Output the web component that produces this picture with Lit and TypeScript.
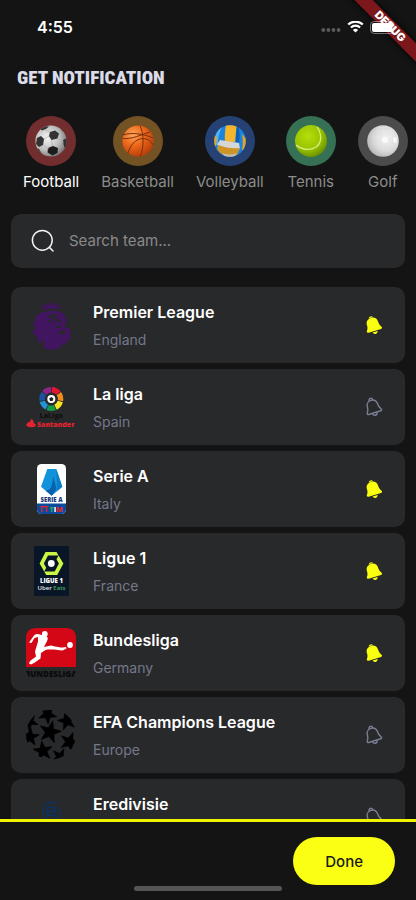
import { LitElement, html, svg, css } from "lit";
import { customElement, property, state } from "lit/decorators.js";
import { classMap } from "lit/directives/class-map.js";

interface Sport { id: string; name: string; }
interface League { id: string; name: string; country: string; on: boolean; }

const sports: Sport[] = [
  { id: "football", name: "Football" },
  { id: "basketball", name: "Basketball" },
  { id: "volleyball", name: "Volleyball" },
  { id: "tennis", name: "Tennis" },
  { id: "golf", name: "Golf" },
];

const balls: Record<string, unknown> = {
  football: svg`
    <defs>
      <radialGradient id="g" cx=".38" cy=".4" r=".68"><stop offset="0" stop-color="#f4f4f4"/><stop offset=".6" stop-color="#bdbdbd"/><stop offset="1" stop-color="#6c6c6c"/></radialGradient>
      <clipPath id="c"><circle cx="16" cy="16" r="15.6"/></clipPath>
    </defs>
    <circle cx="16" cy="16" r="15.6" fill="url(#g)"/>
    <g clip-path="url(#c)" fill="#333">
      <path d="M15 7l5-1.6 4 3-1.5 5-6 1.5-2.5-4z"/>
      <path d="M2 13l4-2 3 3-1 6-4 2-3-3z"/>
      <path d="M13 23l5-2 5 2-.5 5-5 2.5-5-3z" fill="#1d1d1d"/>
      <path d="M28 15l4-2v10l-3-1z"/>
      <path d="M5 4l4-3 5 .5-3 2.5-4 1.5z"/>
      <path d="M1 23l3 1 3 5-3 1z M25 1l5 6-3-1z"/>
    </g>
    <path d="M9 14l5-3M8 20l6 4M16.5 15l1 6M22.5 13.5l6 3M23 24l6-3M10 5l5 2" stroke="#aaa" stroke-width=".6" fill="none"/>`,
  basketball: svg`
    <defs><radialGradient id="g" cx=".35" cy=".3" r=".75"><stop offset="0" stop-color="#ffa75a"/><stop offset=".45" stop-color="#ee6a1c"/><stop offset="1" stop-color="#b63c08"/></radialGradient></defs>
    <circle cx="16" cy="16" r="15.6" fill="url(#g)"/>
    <path d="M18 .6c4 8 4 21 .5 30.5M.8 13.5c9 1 19-4 27-6.5M6 28C9 17 17 12 24 14c4 1 6 4 7 6M1 10C10 7 22 9 31 13" fill="none" stroke="#7a2f0c" stroke-width="1"/>`,
  volleyball: svg`
    <defs><clipPath id="c"><circle cx="16" cy="16" r="15.8"/></clipPath></defs>
    <g clip-path="url(#c)">
      <rect width="32" height="32" fill="#1b84e0"/>
      <path d="M12 0h11c-1 6-1.5 11-2 17h-10c-.5-6 0-12 1-17z" fill="#f5b52c"/>
      <path d="M5 4c-3 4-5 9-4 16l3-1c0-6 1-11 4-17z" fill="#53b3f5"/>
      <path d="M0 10l3 2-1 9-3-1z M28 9l5 6v10h-5c1-5 1-11 0-16z" fill="#e8a325"/>
      <path d="M23 0c-1 6-1 11-1 17l3 1c1-6 1-12-1-18z" fill="#0e5fb4"/>
      <path d="M6 15c6 1 12 2 19 3l1 6c-7 1-16-1-23-4z" fill="#d6d6d6"/>
      <path d="M4 20c7 2.500 15 4 22 3l-3 7c-7 4-16 1-20-6z" fill="#cf9426"/>
      <path d="M8 28c5 2 10 2 15 0l-3 4H11z" fill="#bdbdbd"/>
    </g>`,
  tennis: svg`
    <defs><radialGradient id="g" cx=".4" cy=".35" r=".7"><stop offset="0" stop-color="#b5de0c"/><stop offset=".6" stop-color="#98c400"/><stop offset="1" stop-color="#658a00"/></radialGradient></defs>
    <circle cx="16" cy="16" r="16" fill="url(#g)"/>
    <path d="M22 2c5 7 5 16-1 20-6 4-14 3-20-2" fill="none" stroke="#dcec88" stroke-width="1.2"/>`,
  golf: svg`
    <defs>
      <radialGradient id="g" cx=".6" cy=".42" r=".7"><stop offset="0" stop-color="#f6f6f6"/><stop offset=".55" stop-color="#dedede"/><stop offset="1" stop-color="#acacac"/></radialGradient>
      <pattern id="d" width="2.4" height="2.4" patternUnits="userSpaceOnUse"><circle cx="1.2" cy="1.2" r=".7" fill="#b5b5b5"/></pattern>
    </defs>
    <circle cx="16" cy="16" r="15.8" fill="url(#g)"/>
    <circle cx="16" cy="16" r="15" fill="url(#d)" opacity=".25"/>
    <circle cx="18" cy="15" r="3" fill="#fff" opacity=".7"/><ellipse cx="28" cy="15" rx="2" ry="3" fill="#fff" opacity=".7"/>`,
};

/** Points of a five-pointed star round (cx, cy). */
function star(cx: number, cy: number, r: number, turn: number): string {
  return Array.from({ length: 10 }, (_, i) => {
    const a = ((turn + i * 36 - 90) * Math.PI) / 180;
    const d = i % 2 ? r * 0.4 : r;
    return `${(cx + d * Math.cos(a)).toFixed(2)},${(cy + d * Math.sin(a)).toFixed(2)}`;
  }).join(" ");
}

/** One slice of a ring, angles in degrees clockwise from the top. */
function slice(cx: number, cy: number, r1: number, r2: number, from: number, to: number): string {
  const p = (r: number, deg: number) => {
    const a = ((deg - 90) * Math.PI) / 180;
    return `${(cx + r * Math.cos(a)).toFixed(2)} ${(cy + r * Math.sin(a)).toFixed(2)}`;
  };
  return `M${p(r2, from)}A${r2} ${r2} 0 0 1 ${p(r2, to)}L${p(r1, to)}A${r1} ${r1} 0 0 0 ${p(r1, from)}Z`;
}

const ringColors = ["#e3172c", "#f08c1b", "#f6e520", "#159b48", "#2592d4", "#1c50a0", "#912489"];

const logos: Record<string, unknown> = {
  premier: svg`
    <path fill="#41155f" d="M15.3 2.500l3.200 4 1.300-3.500 2.200 3 2.600-5 2.400 5 2.500-3 1 3.500 3.300-3.500-.8 6.500c-5-1.500-11-1.500-16.200.5z"/>
    <path fill="#41155f" d="M14 13.500C19 10.500 28 9.800 34 11.800c3.500 1.500 5.500 4 6.300 8l.7 6 3.800 5.500-1 8-3 1.500-.8 3.200-4 .5-2 3.800-7.500 1.500-8.800-1.500.3-9-5 4.500-1.800-6.500-5.500-5.500 3.500-2-2-7.500 3.200-2-1.300-3.200z"/>
    <g fill="#28292b">
      <path d="M21.500 16.500c3.500-2.500 8-3 12.500-.7-3.500-.2-6 .2-7.500 1.500 3 .2 5 .7 6 2.200l4.500 3c-3 .2-5.500-.5-7-2-2.500-1.800-5.500-2.500-8.500-4z"/>
      <path d="M21 19.200c3 0 5 2.300 8.500 2.300-3 1.800-7 .7-8.500-2.300z"/>
      <path d="M28.500 25.500c2 1.200 4.500 1 7-.7-.3 2-1.500 3.200-3.200 3.200-2 0-3.300-1-3.800-2.500z"/>
      <path d="M38 24.500l3-1 .3 4.500-2.300-.5z"/>
      <path d="M32 33.500c1.500-3.200 4-2.200 8-3.500l-1 3.500c-2 1-5 1-7 0z"/>
    </g>`,
  laliga: svg`
    ${ringColors.map((c, i) => svg`<path d=${slice(25.3, 17, 6.6, 12, 3 + i * 51.4, 50 + i * 51.4)} fill=${c}/>`)}
    <circle cx="25.3" cy="17" r="4" fill="#fff"/>
    <path d="M25.3 14.9l2.1 1.6-.8 2.400h-2.600l-.8-2.400z" fill="#222"/>
    <text x="25.3" y="36" class="lg" font-size="7" fill="#111" text-anchor="middle">LaLiga</text>
    <path d="M1 41.500c.5-1.500 2-1.500 3-1.800.6-1.500 1-3 1.800-3 1 1 2.200 3 2 4.500 1.500.3 2.700 1.500 2 2.800-2 1.700-7 1.700-9 0-.8-.8-.5-1.700.2-2.500z" fill="#e02430"/>
    <text x="11" y="44.7" class="lg" font-size="7" fill="#e02430">Santander</text>`,
  seriea: svg`
    <defs><clipPath id="c"><rect x="11" width="29" height="50" rx="4.5"/></clipPath></defs>
    <g clip-path="url(#c)"><rect x="11" width="29" height="50" fill="#fff"/><rect x="11" y="39.5" width="29" height="11" fill="#0d4a9c"/></g>
    <path d="M21.300 5h9l6 17.700-10.600 9-10.700-9z" fill="#1193dc"/>
    <path d="M27 12l3.500 13-4.800 6.700-6-5 4-1.500c2-2 3-7 3.300-13.200z" fill="#0a62ae"/>
    <path d="M30.300 5l6 17.700-5 4.300z" fill="#0b7cc6"/>
    <text x="25.5" y="37.5" class="lg" font-size="6" fill="#173a78" text-anchor="middle">SERIE A</text>
    <path d="M14.500 42.700h7.500M15.900 44v4M20.600 44v4" stroke="#e0242f" stroke-width="1.4" fill="none"/>
    <text x="23.5" y="48" class="lg" font-size="7"><tspan fill="#2aa84e">T</tspan><tspan fill="#fff">I</tspan><tspan fill="#e0242f">M</tspan></text>`,
  ligue1: svg`
    <rect x="8" width="35" height="50" rx="1" fill="#091628"/>
    <path d="M19.500 6h11l2 3.600h-10.500l-4.200 7.800 2.400 4.400-2 3.700-4.600-8.100z" fill="#cdf545"/>
    <path d="M31.200 29h-11l-2-3.600h10.500l4.200-7.800-2.400-4.400 2-3.700 4.900 8.100z" fill="#cdf545"/>
    <circle cx="25.3" cy="17.5" r="3.4" fill="#fff"/>
    <text x="25.5" y="37" class="lg" font-size="6" fill="#fff" text-anchor="middle">LIGUE 1</text>
    <text x="25.5" y="44" class="lt" font-size="6" text-anchor="middle" fill="#e6e6e6">Uber <tspan fill="#45a862">Eats</tspan></text>`,
  bundesliga: svg`
    <defs><clipPath id="c"><path d="M0 0h50v43l-3 7H3l-3-7z"/></clipPath></defs>
    <path d="M0 39V10Q0 0 10 0h30q10 0 10 10v29z" fill="#d30716"/>
    <circle cx="18.8" cy="6" r="2.9" fill="#fff"/><circle cx="44" cy="17" r="2.9" fill="#fff"/>
    <path fill="#fff" d="M3 14.500L8 7.500c1-1 2-1.500 4-1.500l9 2.500c1.500 2 .5 4-1 6.500l-2 4 7-1.500c6 1.500 9 2 12 2l3-.5.5 1.500-4 2c-6-.5-12-1.500-17-.5l-4.500 3-.5 5.500-6.500 4.500-3 1.500-2-1 1-2.500 6-4.500-1-5 3-10 0-4.500-3.500 1-3 5z"/>
    <text x="25" y="49" class="lg" font-size="8" fill="#0a0a0a" text-anchor="middle" clip-path="url(#c)">BUNDESLIGA</text>`,
  champions: svg`
    <defs><clipPath id="c"><circle cx="25" cy="24.5" r="25"/></clipPath></defs>
    <g clip-path="url(#c)" stroke="#000" stroke-width=".7">
      ${[[24, 22, 11.5, 14], [21.5, 4.5, 9.5, 32], [41, 11, 9.5, -14], [43.5, 32, 10, 20], [17, 41, 10, -8], [4, 27, 9.5, 4], [3.5, 11.5, 9, 38], [34, 47, 9, 26]]
        .map(([x, y, r, t]) => svg`<polygon points=${star(x, y, r, t)}/>`)}
    </g>`,
  eredivisie: svg`
    <circle cx="25.5" cy="19" r="8.8" fill="none" stroke="#0c3364" stroke-width="1.4" stroke-dasharray="46 5 6 0"/>
    <path d="M21 19.500h8.500c.3-3-1.600-4.800-4-4.800-2.700 0-4.700 1.900-4.700 4.500s2 4.500 4.700 4.500c1.500 0 2.500-.4 3.500-1.300" fill="none" stroke="#0c3364" stroke-width="1.8"/>
    <path d="M16 31h19M18 35h15" stroke="#0c3364" stroke-width="2"/>`,
};

@customElement("league-row")
class LeagueRow extends LitElement {
  @property({ attribute: false }) league!: League;

  static styles = css`
    :host { display: flex; align-items: center; box-sizing: border-box; min-height: 76px; padding: 13px 22px 13px 15px; border-radius: 10px; background: #28292b; }
    .logo { width: 50px; height: 50px; flex: none; margin-right: 17px; }
    .lg { font-family: "Open Sans", sans-serif; font-weight: 800; }
    .lt { font-family: "Open Sans", sans-serif; font-weight: 600; }
    .names { flex: 1; min-width: 0; }
    .name { margin: 0; font-size: 16px; line-height: 24px; font-weight: 600; color: #fff; }
    .country { margin: 6px 0 0; font-size: 14px; line-height: 20px; color: #74788a; }
    .bell { display: flex; padding: 0; border: 0; background: none; color: #7a7e90; cursor: pointer; }
    .bell.on { color: #faff10; }
    .bell svg { width: 20px; height: 20px; }
  `;

  render() {
    const l = this.league;
    const bell = l.on
      ? svg`<g fill="currentColor">
          <path d="M10 2.600c-3.700 0-5.800 2.500-5.800 5.600 0 2.900-.6 4.200-1.700 5.600-.9 1.200-.3 2.300 1 2.300h13c1.300 0 1.900-1.100 1-2.300-1.100-1.400-1.700-2.700-1.700-5.600 0-3.100-2.100-5.600-5.800-5.600z"/>
          <path d="M7.700 2.700a2.400 2.400 0 0 1 4.600 0 8 8 0 0 0-4.600 0z"/>
          <path d="M7.300 17.100h5.400c-.4 1.400-1.400 2.200-2.700 2.200s-2.300-.8-2.700-2.200z"/>
        </g>`
      : svg`<g fill="none" stroke="currentColor" stroke-width="1.4" stroke-linejoin="round">
          <path d="M10 3c-3.400 0-5.300 2.400-5.300 5.300 0 3.200-.8 4.500-1.900 5.800-.6.800-.2 1.800.8 1.800h12.800c1 0 1.400-1 .8-1.800-1.100-1.300-1.900-2.600-1.900-5.800 0-2.900-1.900-5.300-5.300-5.300z"/>
          <path d="M8.200 3.200a1.850 1.850 0 1 1 3.600 0M7.600 16.200c.3 1.600 1.200 2.400 2.400 2.400s2.100-.8 2.400-2.400"/>
        </g>`;
    return html`
      <svg class="logo" viewBox="0 0 50 50" aria-hidden="true">${logos[l.id]}</svg>
      <div class="names"><h2 class="name">${l.name}</h2><p class="country">${l.country}</p></div>
      <button class=${classMap({ bell: true, on: l.on })} aria-label="Notify me about ${l.name}" aria-pressed=${l.on ? "true" : "false"}
        @click=${() => this.dispatchEvent(new CustomEvent("toggle"))}>
        <svg viewBox="0 0 20 20"><g transform="rotate(-17 10 10)">${bell}</g></svg>
      </button>`;
  }
}

/** A ball picture; its own shadow root keeps the gradient ids apart. */
@customElement("sport-ball")
class SportBall extends LitElement {
  @property() kind = "football";
  static styles = css`
    :host { display: flex; }
    .ball { width: 32px; height: 32px; }
  `;
  render() {
    return html`<svg class="ball" viewBox="0 0 32 32" aria-hidden="true">${balls[this.kind]}</svg>`;
  }
}

@customElement("app-root")
class AppRoot extends LitElement {
  @state() private sport = "football";
  @state() private leagues: League[] = [
    { id: "premier", name: "Premier League", country: "England", on: true },
    { id: "laliga", name: "La liga", country: "Spain", on: false },
    { id: "seriea", name: "Serie A", country: "Italy", on: true },
    { id: "ligue1", name: "Ligue 1", country: "France", on: true },
    { id: "bundesliga", name: "Bundesliga", country: "Germany", on: true },
    { id: "champions", name: "EFA Champions League", country: "Europe", on: false },
    { id: "eredivisie", name: "Eredivisie", country: "Netherlands", on: false },
  ];

  static styles = css`
    :host { position: relative; display: flex; flex-direction: column; height: 100vh; overflow: hidden; background: #141414; color: #fff; font-family: Inter, "Liberation Sans", sans-serif; }
    button { font-family: inherit; cursor: pointer; }
    .status { display: flex; align-items: center; justify-content: space-between; flex: none; height: 54px; padding: 0 19px 0 37px; }
    .clock { font-size: 16px; line-height: 24px; font-weight: 600; }
    .signals { position: relative; z-index: 2; display: flex; align-items: center; gap: 6px; }
    .dots { width: 20px; height: 12px; margin-top: 7px; }
    .wifi { width: 17px; height: 13px; }
    .battery { width: 27px; height: 13px; }
    .corner { position: absolute; z-index: 1; top: 0; right: 0; width: 72px; height: 72px; overflow: hidden; }
    .ribbon { position: absolute; top: 20px; right: -34px; width: 120px; height: 13px; display: flex; align-items: center; justify-content: center; background: #7c171b; box-shadow: 0 0 6px #000; transform: rotate(45deg); font-size: 11px; line-height: 13px; font-weight: 900; }
    .title { flex: none; margin: 12px 17px 0; font-family: "Roboto Condensed", "Liberation Sans Narrow", Roboto, sans-serif; font-size: 19px; line-height: 24px; font-weight: 900; color: #dcdce8; text-transform: uppercase; white-space: nowrap; }
    .sports { flex: none; display: flex; gap: 22px; margin-top: 26px; padding: 0 8px 0 23px; overflow-x: auto; scrollbar-width: none; }
    .sport { flex: none; display: flex; flex-direction: column; align-items: center; gap: 6px; padding: 0; border: 0; background: none; color: #8c8c8c; font-size: 15px; line-height: 20px; }
    .sport.active { color: #fff; }
    .disc { display: flex; align-items: center; justify-content: center; width: 50px; height: 50px; border-radius: 50%; }
    .football { background: #722d2e; }
    .basketball { background: #735223; }
    .volleyball { background: #264275; }
    .tennis { background: #367055; }
    .golf { background: #4b4b4b; }
    .search { flex: none; display: flex; align-items: center; gap: 14px; height: 54px; margin: 22px 11px 0; padding: 0 20px; border-radius: 10px; background: #28292b; }
    .search svg { width: 24px; height: 24px; flex: none; }
    .search input { flex: 1; min-width: 0; padding: 0; border: 0; outline: 0; background: none; color: #fff; font-family: inherit; font-size: 15px; line-height: 20px; }
    .search input::placeholder { color: #8a8a8a; opacity: 1; }
    .list { flex: 1; min-height: 0; display: flex; flex-direction: column; gap: 6px; margin-top: 19px; padding: 0 11px; overflow-y: auto; scrollbar-width: none; }
    .list league-row { flex: none; }
    .footer { position: relative; flex: none; display: flex; justify-content: flex-end; padding: 15px 21px; border-top: 3px solid #f0f400; background: #141414; }
    .done { height: 48px; padding: 0 32px; border: 0; border-radius: 24px; background: #faff14; color: #1a1a1a; font-size: 15px; font-weight: 500; }
    .home { position: absolute; left: 50%; bottom: 9px; width: 148px; height: 5px; margin-left: -74px; border-radius: 3px; background: #555; }
  `;

  private toggle(id: string) {
    this.leagues = this.leagues.map((l) => (l.id === id ? { ...l, on: !l.on } : l));
  }

  render() {
    return html`
      <div class="status">
        <span class="clock">4:55</span>
        <div class="signals">
          <svg class="dots" viewBox="0 0 20 12" fill="#5a5a5a" aria-hidden="true">${[2.3, 7.4, 12.5, 17.6].map((x) => svg`<circle cx=${x} cy="5" r="1.9"/>`)}</svg>
          <svg class="wifi" viewBox="0 0 17 13" aria-hidden="true">
            <path d="M1.200 3.600a10.400 10.400 0 0 1 14.600 0M3.900 6.500a6.600 6.600 0 0 1 9.200 0" fill="none" stroke="#fff" stroke-width="2.1"/>
            <path d="M8.500 11.600L5.900 9a3.800 3.800 0 0 1 5.200 0z" fill="#fff"/>
          </svg>
          <svg class="battery" viewBox="0 0 27 13" aria-hidden="true">
            <rect x=".5" y=".5" width="23.5" height="12" rx="3.5" fill="none" stroke="#fff" stroke-opacity=".4"/>
            <rect x="2" y="2" width="20.5" height="9" rx="2" fill="#fff"/>
            <path d="M25.200 4.500v4q1.400-.6 1.400-2t-1.400-2z" fill="#fff" fill-opacity=".5"/>
          </svg>
        </div>
      </div>
      <div class="corner"><div class="ribbon">DEBUG</div></div>
      <h1 class="title">Get notification</h1>
      <nav class="sports" aria-label="Sports">
        ${sports.map((s) => html`
          <button class=${classMap({ sport: true, active: s.id === this.sport })} @click=${() => (this.sport = s.id)}>
            <span class="disc ${s.id}"><sport-ball .kind=${s.id}></sport-ball></span>${s.name}
          </button>`)}
      </nav>
      <label class="search">
        <svg viewBox="0 0 24 24" fill="none" stroke="#f2f2f2" stroke-width="1.5" stroke-linecap="round" aria-hidden="true"><circle cx="11.3" cy="11.3" r="9.9"/><path d="M18.400 18.400l3.600 3.600"/></svg>
        <input type="text" placeholder="Search team..." aria-label="Search team">
      </label>
      <main class="list">
        ${this.leagues.map((l) => html`<league-row .league=${l} @toggle=${() => this.toggle(l.id)}></league-row>`)}
      </main>
      <footer class="footer"><button class="done">Done</button><span class="home"></span></footer>`;
  }
}
